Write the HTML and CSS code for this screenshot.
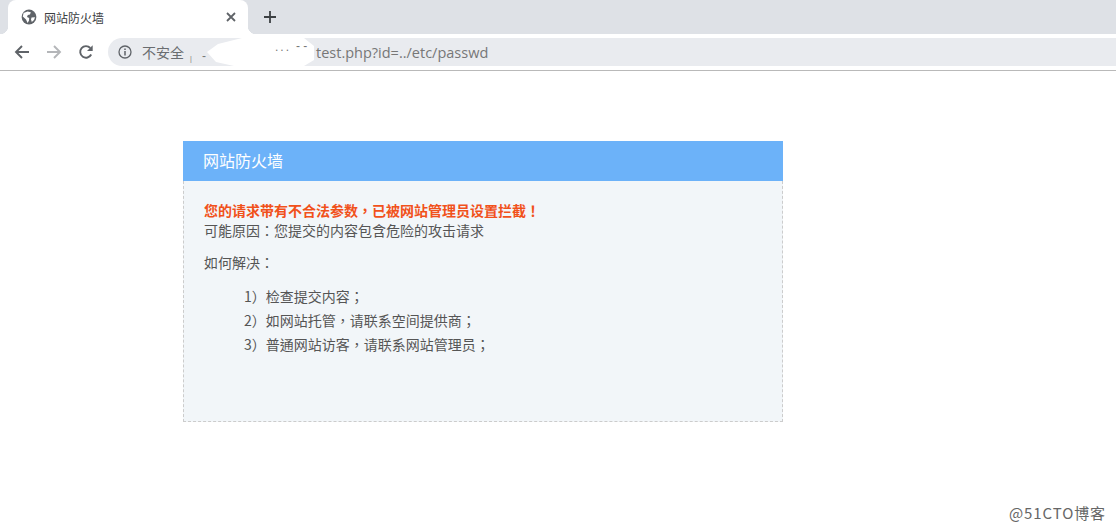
FILE: index.html
```html
<!DOCTYPE html>
<html lang="zh-CN">
<head>
  <meta charset="UTF-8">
  <title>网站防火墙</title>
  <link rel="stylesheet" href="styles.css">
</head>
<body>
  <div class="tab-strip">
    <div class="tab">
      <svg class="tab-globe" viewBox="0 0 16 16" width="16" height="16">
        <circle cx="8" cy="8" r="7.4" fill="#5f6368"/>
        <path d="M2.6 4 L6.5 2.6 L9.8 3.2 L9 5.4 L6.8 6 L6 8 L8.2 9 L8 11.6 L6.6 14 L5 10.6 L1.8 7.6 Z" fill="#fff"/>
        <path d="M10.5 8.5 L14 8.3 L13 11 L10.8 13 L10 10.5 Z" fill="#fff"/>
      </svg>
      <span class="tab-title">网站防火墙</span>
      <svg class="tab-close" viewBox="0 0 10 10" width="10" height="10">
        <path d="M1 1 L9 9 M9 1 L1 9" stroke="#5f6368" stroke-width="1.8"/>
      </svg>
    </div>
    <svg class="new-tab" viewBox="0 0 12 12" width="12" height="12">
      <path d="M6 0 V12 M0 6 H12" stroke="#3c4043" stroke-width="1.8"/>
    </svg>
  </div>

  <div class="toolbar">
    <svg class="nav-icon" viewBox="0 0 16 16" width="16" height="16">
      <path d="M15 8 H2 M8 2 L2 8 L8 14" fill="none" stroke="#5f6368" stroke-width="1.9"/>
    </svg>
    <svg class="nav-icon" viewBox="0 0 16 16" width="16" height="16">
      <path d="M1 8 H14 M8 2 L14 8 L8 14" fill="none" stroke="#b4b6b9" stroke-width="1.9"/>
    </svg>
    <svg class="nav-icon" viewBox="0 0 16 16" width="16" height="16">
      <path d="M13.2 10.5 A5.8 5.8 0 1 1 12.3 4" fill="none" stroke="#5f6368" stroke-width="1.9"/>
      <path d="M14.7 1.2 V7 H9 Z" fill="#5f6368"/>
    </svg>
    <div class="omnibox">
      <svg class="info-icon" viewBox="0 0 14 14" width="14" height="14">
        <circle cx="7" cy="7" r="6" fill="none" stroke="#5f6368" stroke-width="1.3"/>
        <path d="M7 6 V10.5 M7 3.4 V5" stroke="#5f6368" stroke-width="1.5"/>
      </svg>
      <span class="not-secure">不安全</span>
      <span class="url">test.php?id=../etc/passwd</span>
      <div class="redaction"></div>
      <span class="speck speck-a">|</span>
      <span class="speck speck-b">-</span>
      <span class="speck speck-c">...</span>
      <span class="speck speck-d">- -</span>
    </div>
  </div>

  <div class="page">
    <div class="panel">
      <div class="panel-title">网站防火墙</div>
      <div class="panel-body" lang="zh-TW">
        <p class="warning">您的请求带有不合法参数，已被网站管理员设置拦截！</p>
        <p class="reason">可能原因：您提交的内容包含危险的攻击请求</p>
        <p class="how">如何解决：</p>
        <ul class="steps">
          <li>1）检查提交内容；</li>
          <li>2）如网站托管，请联系空间提供商；</li>
          <li>3）普通网站访客，请联系网站管理员；</li>
        </ul>
      </div>
    </div>
  </div>

  <div class="watermark">@51CTO博客</div>
</body>
</html>
```

FILE: styles.css
```css
* {
  box-sizing: border-box;
}

html, body {
  height: 100%;
}

body {
  margin: 0;
  position: relative;
  overflow: hidden;
  background: #fff;
  font-family: "Noto Sans CJK SC", "Liberation Sans", sans-serif;
  color: #555;
}

.tab-strip {
  display: flex;
  align-items: flex-end;
  height: 34px;
  padding-left: 8px;
  background: #dee1e6;
}

.tab {
  position: relative;
  display: flex;
  align-items: center;
  width: 240px;
  height: 34px;
  padding: 0 12px 0 13px;
  background: #fff;
  border-radius: 8px 8px 0 0;
}

.tab::before,
.tab::after {
  content: "";
  position: absolute;
  bottom: 0;
  width: 8px;
  height: 8px;
}

.tab::before {
  left: -8px;
  background: radial-gradient(circle at 0 0, #dee1e6 8px, #fff 8.5px);
}

.tab::after {
  right: -8px;
  background: radial-gradient(circle at 100% 0, #dee1e6 8px, #fff 8.5px);
}

.tab-title {
  flex: 1;
  margin-left: 7px;
  font-size: 12px;
  color: #3c4043;
}

.new-tab {
  margin: 0 0 11px 16px;
}

.toolbar {
  display: flex;
  align-items: center;
  height: 37px;
  padding-left: 14px;
  background: #fff;
  border-bottom: 1px solid #b9b9b9;
}

.nav-icon {
  margin-right: 16px;
}

.omnibox {
  position: relative;
  display: flex;
  align-items: center;
  flex: 1;
  height: 28px;
  margin-left: -2px;
  padding-left: 10px;
  background: #e9ebef;
  border-radius: 14px 0 0 14px;
}

.info-icon {
  margin-right: 10px;
}

.not-secure {
  font-size: 14px;
  color: #6a6d70;
}

.url {
  margin-left: 132px;
  font-family: "Open Sans", "Liberation Sans", sans-serif;
  font-size: 14.5px;
  color: #777;
}

.redaction {
  position: absolute;
  left: 96px;
  top: 0;
  width: 112px;
  height: 29px;
  background: #fff;
  clip-path: polygon(3px 14px, 14px 6px, 38px 0, 100px 0, 110px 8px, 110px 22px, 100px 28px, 30px 28px, 12px 24px);
}

.speck {
  position: absolute;
  font-family: "Liberation Sans", sans-serif;
  font-size: 12px;
  line-height: 12px;
  color: #777;
}

.speck-a {
  left: 82px;
  top: 15px;
  font-size: 7px;
}

.speck-b {
  left: 94px;
  top: 12px;
}

.speck-c {
  left: 167px;
  top: 3px;
  letter-spacing: 2px;
}

.speck-d {
  left: 188px;
  top: 2px;
}

.page {
  padding: 70px 0 0 183px;
}

.panel {
  width: 600px;
}

.panel-title {
  height: 40px;
  padding-left: 20px;
  background: #6cb2f9;
  font-size: 16px;
  line-height: 39px;
  color: #fff;
}

.panel-body {
  height: 241px;
  padding: 19px 20px 0;
  background: #f2f6f9;
  border: 1px dashed #ccc;
  border-top: 0;
  font-family: "Noto Sans CJK TC", "Noto Sans CJK SC", sans-serif;
  font-size: 14px;
  line-height: 20px;
}

.panel-body p {
  margin: 0;
}

.warning {
  font-weight: bold;
  color: #f1511b;
}

.panel-body .how {
  margin-top: 12px;
}

.steps {
  margin: 12px 0 0;
  padding: 0 0 0 40px;
  list-style: none;
  line-height: 24px;
}

.watermark {
  position: absolute;
  right: 10px;
  bottom: 7px;
  font-size: 15px;
  line-height: 20px;
  letter-spacing: 0.9px;
  color: #666;
}
```
